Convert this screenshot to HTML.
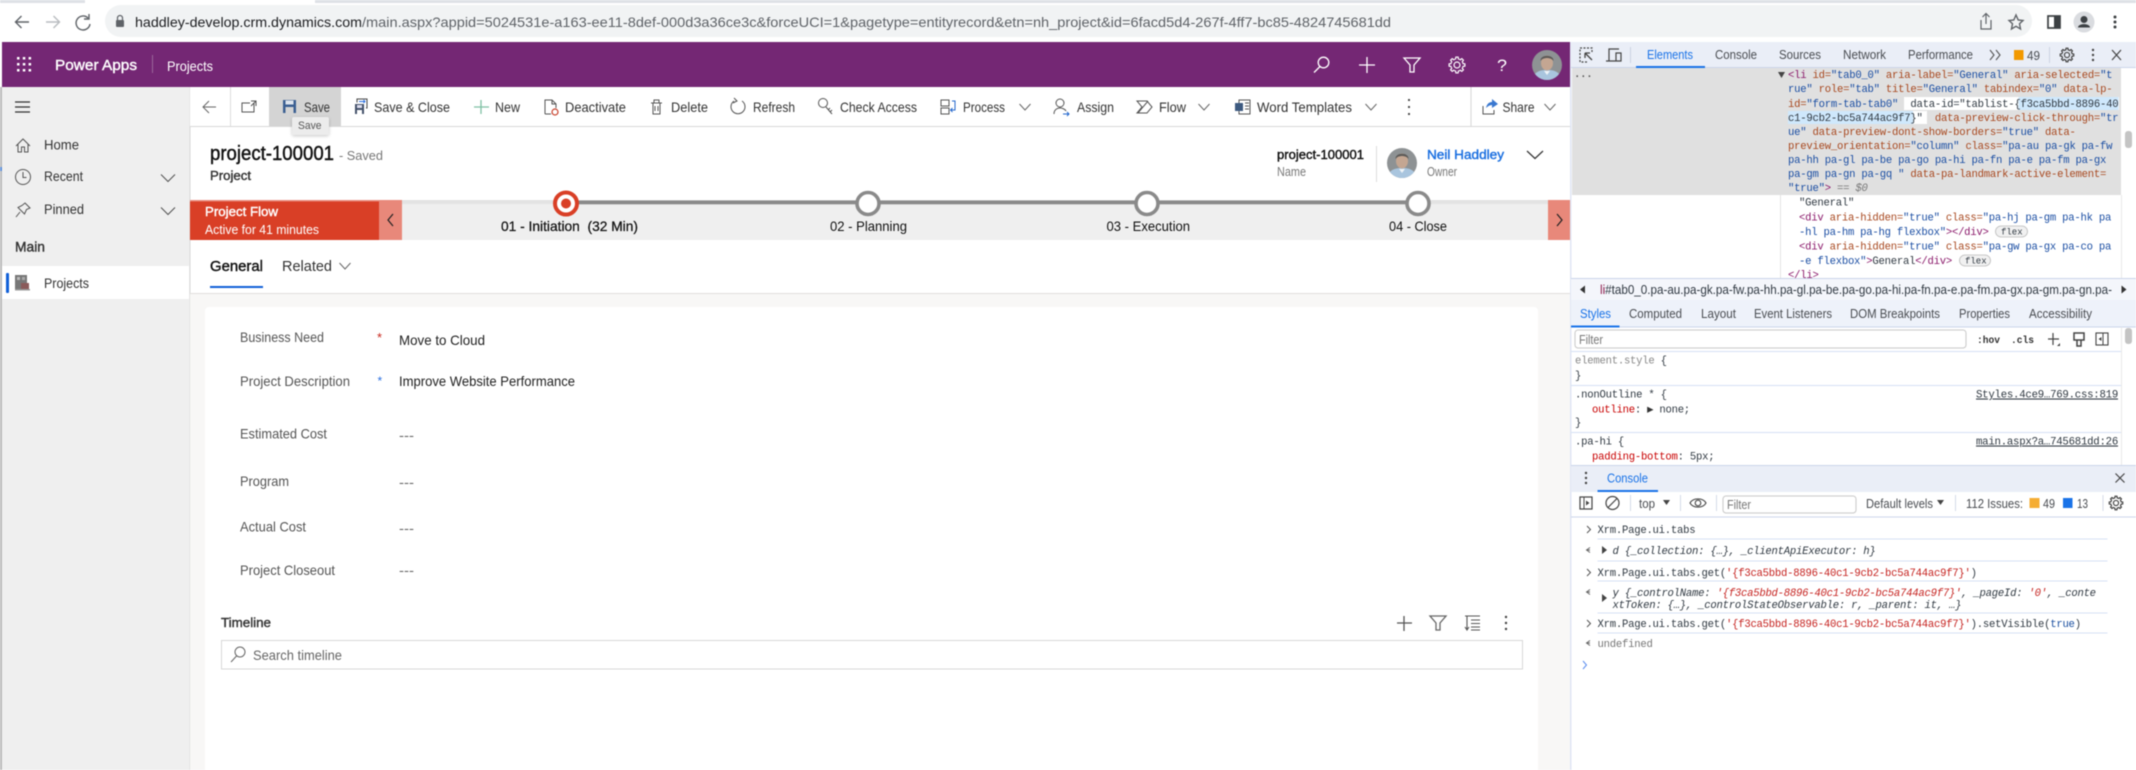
<!DOCTYPE html>
<html lang="en">
<head>
<meta charset="utf-8">
<title>Power Apps - Projects</title>
<style>
html,body{margin:0;padding:0;width:2136px;height:770px;overflow:hidden;background:#fff}
svg{display:block;filter:blur(.5px)}
text{font-family:"Liberation Sans",sans-serif;font-size:14px;fill:#333;white-space:pre}
.w{fill:#fff}
.b{stroke:#333;stroke-width:.4px}
.w.b{stroke:#fff}
.g{fill:#666}
.d{fill:#111}
.u{font-size:14px;fill:#5f6368}
.dt{font-size:13px;fill:#4a4d52}
.m,.m tspan{font-family:"Liberation Mono",monospace;font-size:10.6px;letter-spacing:-.24px;fill:#303942}
.tg{fill:#8b1a6b!important}.an{fill:#a8481f!important}.av{fill:#1b4ea3!important}.tx{fill:#303942!important}
.red{fill:#c5221f!important}.blu{fill:#1a4fa0!important}.gr{fill:#777!important}.i{font-style:italic}
.ic{fill:none;stroke:#555;stroke-width:1}
.iw{fill:none;stroke:#fff;stroke-width:1.3}
.id{fill:none;stroke:#555;stroke-width:1.3}
</style>
</head>
<body>
<svg width="2136" height="770" viewBox="0 0 2136 770" xmlns="http://www.w3.org/2000/svg">
<defs>
<clipPath id="cav"><circle cx="0" cy="0" r="15"/></clipPath>
<g id="avatar">
<g clip-path="url(#cav)">
<rect x="-15" y="-15" width="30" height="30" fill="#8e9294"/>
<path d="M-15 15 C-13 6 -6 5 0 5 C6 5 13 6 15 15Z" fill="#a9c5de"/>
<ellipse cx="0" cy="-2" rx="6" ry="7.500" fill="#c4a692"/>
<path d="M-6.500 -4 C-7 -11 7 -11 6.500 -4 C4 -8 -4 -8 -6.500 -4Z" fill="#5c5a58"/>
<path d="M-3 6 L0 10 L3 6Z" fill="#eef3f7"/>
</g>
</g>
<path id="chev" d="M-7 -3.500 L0 3.500 L7 -3.500" fill="none" stroke="#555" stroke-width="1.100"/>
<path id="chev2" d="M-5.500 -3 L0 3 L5.500 -3" fill="none" stroke="#666" stroke-width="1"/>
<path id="funnel" d="M-8 -7 H8 L2 0 V7 H-2 V0Z" fill="none" stroke-width="1.300"/>
<g id="gear" fill="none">
<circle r="3"/>
<path id="gs" d="M5.730 -2.370 L6.040 -1.390 L7.920 -1.110 V1.110 L6.040 1.390 L5.730 2.370"/>
<use href="#gs" transform="rotate(45)"/><use href="#gs" transform="rotate(90)"/><use href="#gs" transform="rotate(135)"/><use href="#gs" transform="rotate(180)"/><use href="#gs" transform="rotate(225)"/><use href="#gs" transform="rotate(270)"/><use href="#gs" transform="rotate(315)"/>
</g>
<filter id="sh" x="-30%" y="-30%" width="160%" height="170%"><feDropShadow dx="0" dy="1" stdDeviation="1.500" flood-color="#000" flood-opacity=".22"/></filter>
</defs>

<!-- browser chrome -->
<rect width="2136" height="42" fill="#fff"/>
<rect width="85" height="3" fill="#dee1e6"/>
<rect x="315" width="1821" height="3" fill="#dee1e6"/>
<rect x="105" y="5" width="1927" height="32" rx="16" fill="#f1f3f4"/>
<path d="M29 22 H16 M21.500 16 L15.500 22 L21.500 28" fill="none" stroke="#5f6368" stroke-width="1.400"/>
<path d="M46 22 H59 M53.500 16 L59.500 22 L53.500 28" fill="none" stroke="#b9bcc0" stroke-width="1.400"/>
<path d="M88 18 A7 7 0 1 0 90 24 M89 14 V19 H84" fill="none" stroke="#5f6368" stroke-width="1.400"/>
<rect x="116" y="20" width="8" height="7" rx="1" fill="#5f6368"/>
<path d="M117.500 20 V18 A2.500 2.500 0 0 1 122.500 18 V20" fill="none" stroke="#5f6368" stroke-width="1.200"/>
<text x="135" y="27" style="font-size:14px;fill:#202124" textLength="227" lengthAdjust="spacingAndGlyphs">haddley-develop.crm.dynamics.com</text>
<text x="362" y="27" class="u" textLength="1029" lengthAdjust="spacingAndGlyphs">/main.aspx?appid=5024531e-a163-ee11-8def-000d3a36ce3c&amp;forceUCI=1&amp;pagetype=entityrecord&amp;etn=nh_project&amp;id=6facd5d4-267f-4ff7-bc85-4824745681dd</text>
<path d="M1981 20 V29 H1991 V20 M1986 24 V14 M1982.500 17 L1986 13.500 L1989.500 17" fill="none" stroke="#5f6368" stroke-width="1.200"/>
<path d="M2016 15 L2018.200 20 L2023 20.500 L2019.500 23.800 L2020.500 29 L2016 26.300 L2011.500 29 L2012.500 23.800 L2009 20.500 L2013.800 20Z" fill="none" stroke="#5f6368" stroke-width="1.400"/>
<rect x="2048" y="16" width="12" height="12" fill="none" stroke="#3c4043" stroke-width="1.700"/>
<rect x="2054" y="16" width="6" height="12" fill="#3c4043"/>
<circle cx="2084" cy="22" r="10.500" fill="#dadce0"/>
<circle cx="2084" cy="19.500" r="3.500" fill="#3c4043"/>
<path d="M2078 27.500 C2078 23 2090 23 2090 27.500Z" fill="#3c4043"/>
<circle cx="2115" cy="17" r="1.500" fill="#3c4043"/><circle cx="2115" cy="22" r="1.500" fill="#3c4043"/><circle cx="2115" cy="27" r="1.500" fill="#3c4043"/>

<!-- purple header -->
<rect x="2" y="42" width="1568" height="45" fill="#742774"/>
<g fill="#fff">
<rect x="17" y="57" width="2.500" height="2.500"/><rect x="22.800" y="57" width="2.500" height="2.500"/><rect x="28.600" y="57" width="2.500" height="2.500"/>
<rect x="17" y="63" width="2.500" height="2.500"/><rect x="22.800" y="63" width="2.500" height="2.500"/><rect x="28.600" y="63" width="2.500" height="2.500"/>
<rect x="17" y="69" width="2.500" height="2.500"/><rect x="22.800" y="69" width="2.500" height="2.500"/><rect x="28.600" y="69" width="2.500" height="2.500"/>
</g>
<text x="55" y="70" class="w b" style="font-size:15px" textLength="82" lengthAdjust="spacingAndGlyphs">Power Apps</text>
<rect x="152" y="55" width="1" height="18" fill="#9a669a"/>
<text x="167" y="71" class="w" style="font-size:14px" textLength="46" lengthAdjust="spacingAndGlyphs">Projects</text>
<circle cx="1323.500" cy="62.500" r="5.300" class="iw"/><path d="M1320 66.500 L1314 72.500" class="iw"/>
<path d="M1367 57 V73 M1359 65 H1375" class="iw"/>
<use href="#funnel" x="1412" y="65" stroke="#fff"/>
<use href="#gear" transform="translate(1457 65)" stroke="#fff" stroke-width="1.200"/>
<text x="1497" y="71" class="w" style="font-size:17px" textLength="10" lengthAdjust="spacingAndGlyphs">?</text>
<use href="#avatar" x="1547" y="65"/>

<!-- left nav -->
<rect x="0" y="42" width="2" height="45" fill="#fff"/>
<rect x="0" y="87" width="2" height="683" fill="#bababa"/>
<rect x="0" y="167" width="2" height="4" fill="#5b8ed8"/>
<rect x="2" y="87" width="188" height="683" fill="#efefef"/>
<rect x="189.500" y="87" width="1" height="683" fill="#d8d8d8"/>
<path d="M15 102 H30 M15 107 H30 M15 112 H30" fill="none" stroke="#333" stroke-width="1.200"/>
<path d="M16 146 L23 139 L30 146 M18 144.500 V152 H21.500 V147 H24.500 V152 H28 V144.500" class="ic"/>
<text x="44" y="149.500" textLength="35" lengthAdjust="spacingAndGlyphs">Home</text>
<circle cx="23" cy="177" r="7.500" class="ic"/><path d="M23 172 V177.500 H26.500" class="ic"/>
<text x="44" y="181" textLength="39" lengthAdjust="spacingAndGlyphs">Recent</text>
<use href="#chev" x="168" y="178"/>
<path d="M25 203 L30 208 L26.500 209.500 L24.500 214 L18 207.500 L22 205.500Z M20 212 L16 217" class="ic"/>
<text x="44" y="214" textLength="40" lengthAdjust="spacingAndGlyphs">Pinned</text>
<use href="#chev" x="168" y="211"/>
<text x="15" y="251.500" class="b" style="fill:#333" textLength="30" lengthAdjust="spacingAndGlyphs">Main</text>
<rect x="2" y="266" width="187" height="33" fill="#fff"/>
<rect x="6" y="273" width="3" height="20" rx="1" fill="#1160d8"/>
<rect x="15" y="275" width="12" height="15" fill="#777"/>
<rect x="17" y="277" width="3" height="3" fill="#bbb"/><rect x="22" y="277" width="3" height="3" fill="#aaa"/>
<rect x="21" y="283" width="8" height="7" fill="#8a5a5a"/><rect x="15" y="289" width="15" height="1.500" fill="#999"/>
<text x="44" y="288" textLength="45" lengthAdjust="spacingAndGlyphs">Projects</text>

<!-- command bar -->
<rect x="190" y="87" width="1380" height="39" fill="#fff"/>
<rect x="190" y="126" width="1380" height="1" fill="#d8d8d8"/>
<path d="M216 107 H203 M209 101 L203 107 L209 113" class="ic" style="stroke:#666"/>
<rect x="230" y="87" width="1" height="39" fill="#ddd"/>
<path d="M254 103 V112 H242 V103 H250 M251 101 H256 V106 M251 106 L256 101" class="ic"/>
<rect x="269" y="87" width="72" height="39" fill="#d4d4d4"/>
<rect x="283" y="100" width="13" height="13" fill="#3b5f92"/>
<rect x="285.500" y="100.500" width="8" height="4" fill="#dfe6ef"/>
<rect x="285.500" y="107" width="8" height="6" fill="#d4d4d4"/>
<text x="304" y="112" textLength="26" lengthAdjust="spacingAndGlyphs">Save</text>
<rect x="355" y="104" width="9" height="10" fill="#44526a"/>
<rect x="357" y="105" width="5" height="3" fill="#dde"/><rect x="357" y="110" width="5" height="4" fill="#fff"/>
<path d="M357 102.500 V99 H367 V108 H366" fill="none" stroke="#444" stroke-width="1"/>
<path d="M359 101.500 H365 M363.500 100 L365 101.500 L363.500 103" stroke="#2a6fe0" fill="none" stroke-width="1"/>
<text x="374" y="112" textLength="76" lengthAdjust="spacingAndGlyphs">Save &amp; Close</text>
<path d="M481 100 V114 M474 107 H489" fill="none" stroke="#7fc0a4" stroke-width="1.300"/>
<text x="495" y="112" textLength="25" lengthAdjust="spacingAndGlyphs">New</text>
<path d="M545 114 V100 H552 L556 104 V108 M552 100 V104 H556 M545 114 H551" class="ic"/>
<circle cx="555" cy="112" r="3" fill="none" stroke="#c8402a" stroke-width="1.200"/>
<text x="565" y="112" textLength="61" lengthAdjust="spacingAndGlyphs">Deactivate</text>
<path d="M651 103 H662 M653 103 V114 H660 V103 M654 103 V100 H659 V103 M655 106 V111 M658 106 V111" class="ic"/>
<text x="671" y="112" textLength="37" lengthAdjust="spacingAndGlyphs">Delete</text>
<path d="M742 101 A7 7 0 1 1 734 101" class="ic"/><path d="M734 98 L737 101 L733 103" class="ic"/>
<text x="753" y="112" textLength="42" lengthAdjust="spacingAndGlyphs">Refresh</text>
<circle cx="823" cy="103" r="4.500" class="ic"/><path d="M826 107 L832 114 M828 110 L830 108 M830 112 L832 110" class="ic"/>
<text x="840" y="112" textLength="77" lengthAdjust="spacingAndGlyphs">Check Access</text>
<path d="M941 100 H949 V106 H941Z M941 108 H949 V114 H941Z" class="ic"/><path d="M952 101 H955 V110 H951 M952.500 108 L950.500 110 L952.500 112" fill="none" stroke="#2266cc" stroke-width="1"/>
<text x="963" y="112" textLength="42" lengthAdjust="spacingAndGlyphs">Process</text>
<use href="#chev2" x="1025" y="107"/>
<circle cx="1060" cy="103" r="4" class="ic"/><path d="M1054 114 C1054 109 1058 108 1060 108 C1062 108 1065 109 1066 111" class="ic"/>
<path d="M1063 114 H1069 M1067 112 L1069 114 L1067 116" fill="none" stroke="#2266cc" stroke-width="1"/>
<text x="1077" y="112" textLength="37" lengthAdjust="spacingAndGlyphs">Assign</text>
<path d="M1137 101 H1147 L1152 107 L1147 113 H1137 L1142 107Z M1138 113 L1148 101" class="ic"/>
<text x="1159" y="112" textLength="27" lengthAdjust="spacingAndGlyphs">Flow</text>
<use href="#chev2" x="1204" y="107"/>
<rect x="1239" y="100" width="11" height="14" fill="none" stroke="#555" stroke-width="1"/>
<rect x="1235" y="103" width="8" height="8" fill="#3d5a80"/>
<path d="M1245 103 H1249 M1245 106 H1249 M1245 109 H1249" class="ic" style="stroke-width:.9"/>
<text x="1257" y="112" textLength="95" lengthAdjust="spacingAndGlyphs">Word Templates</text>
<use href="#chev2" x="1371" y="107"/>
<circle cx="1409" cy="100" r="1.100" fill="#444"/><circle cx="1409" cy="107" r="1.100" fill="#444"/><circle cx="1409" cy="114" r="1.100" fill="#444"/>
<rect x="1470.500" y="87" width="1" height="39" fill="#d4d4d4"/>
<path d="M1483 106 V114 H1494 V110" class="ic"/>
<path d="M1486 108 C1487 103 1490 102 1492 102 V99 L1498 104 L1492 108 V105 C1490 105 1488 106 1486 108Z" fill="#3a78d0"/>
<text x="1502.500" y="112" textLength="32" lengthAdjust="spacingAndGlyphs">Share</text>
<use href="#chev2" x="1550" y="107"/>

<!-- record header -->
<text x="210" y="160" class="d" style="font-size:20px;stroke:#111;stroke-width:.45px" textLength="124" lengthAdjust="spacingAndGlyphs">project-100001</text>
<text x="339" y="160" style="font-size:13px;fill:#777" textLength="44" lengthAdjust="spacingAndGlyphs">- Saved</text>
<text x="210" y="180" class="b" style="font-size:13px" textLength="41" lengthAdjust="spacingAndGlyphs">Project</text>
<text x="1277" y="159" class="b d" style="font-size:13px;stroke:#111" textLength="87" lengthAdjust="spacingAndGlyphs">project-100001</text>
<text x="1277" y="176" style="font-size:13px;fill:#777" textLength="29" lengthAdjust="spacingAndGlyphs">Name</text>
<rect x="1376" y="146" width="1" height="36" fill="#ddd"/>
<use href="#avatar" x="1402" y="163"/>
<text x="1427" y="159" style="font-size:13px;fill:#1a6fe0;stroke:#1a6fe0;stroke-width:.4px" textLength="77" lengthAdjust="spacingAndGlyphs">Neil Haddley</text>
<text x="1427" y="176" style="font-size:13px;fill:#777" textLength="30" lengthAdjust="spacingAndGlyphs">Owner</text>
<path d="M1527 151 L1535 158.500 L1543 151" fill="none" stroke="#333" stroke-width="1.200"/>

<!-- BPF -->
<rect x="190" y="200" width="1380" height="40" fill="#efefef"/>
<rect x="402" y="200" width="1146" height="4" fill="#e3e3e3"/>
<rect x="190" y="200" width="189" height="40" fill="#d93f26"/>
<rect x="190" y="200" width="189" height="1.500" fill="#e8887a"/>
<rect x="379" y="200" width="23" height="40" fill="#e8887a"/>
<rect x="1548" y="200" width="22" height="40" fill="#e8887a"/>
<text x="205" y="216" class="w b" style="font-size:13px" textLength="73" lengthAdjust="spacingAndGlyphs">Project Flow</text>
<text x="205" y="234" class="w" style="font-size:13px" textLength="114" lengthAdjust="spacingAndGlyphs">Active for 41 minutes</text>
<path d="M393 214 L388 220 L393 226" fill="none" stroke="#222" stroke-width="1.200"/>
<path d="M1557 214 L1562 220 L1557 226" fill="none" stroke="#222" stroke-width="1.200"/>
<rect x="566" y="200.500" width="852" height="3.800" fill="#8a8a8a"/>
<circle cx="566" cy="203.500" r="11" fill="#fff" stroke="#d93f26" stroke-width="4"/>
<circle cx="566" cy="203.500" r="5" fill="#d93f26"/>
<circle cx="868" cy="203.500" r="11" fill="#fff" stroke="#8a8a8a" stroke-width="3.600"/>
<circle cx="1147" cy="203.500" r="11" fill="#fff" stroke="#8a8a8a" stroke-width="3.600"/>
<circle cx="1418" cy="203.500" r="11" fill="#fff" stroke="#8a8a8a" stroke-width="3.600"/>
<text x="501" y="231" class="d" style="font-size:14px;stroke:#111;stroke-width:.25px" textLength="137" lengthAdjust="spacingAndGlyphs">01 - Initiation  (32 Min)</text>
<text x="830" y="231" class="d" style="font-size:14px" textLength="77" lengthAdjust="spacingAndGlyphs">02 - Planning</text>
<text x="1106.500" y="231" class="d" style="font-size:14px" textLength="83.500" lengthAdjust="spacingAndGlyphs">03 - Execution</text>
<text x="1389" y="231" class="d" style="font-size:14px" textLength="58" lengthAdjust="spacingAndGlyphs">04 - Close</text>

<!-- tabs -->
<text x="210" y="271" class="b d" style="font-size:15px;stroke:#111" textLength="53" lengthAdjust="spacingAndGlyphs">General</text>
<text x="282" y="271" style="font-size:15px" textLength="50" lengthAdjust="spacingAndGlyphs">Related</text>
<use href="#chev2" x="345" y="266"/>
<rect x="210" y="286" width="53" height="2" fill="#1160d8"/>
<rect x="190" y="293" width="1380" height="477" fill="#f8f7f6"/>
<rect x="190" y="293" width="1380" height="1" fill="#e1dfdd"/>
<rect x="205" y="307" width="1333" height="470" rx="4" fill="#fff"/>

<!-- fields -->
<text x="240" y="342" style="fill:#555" textLength="84" lengthAdjust="spacingAndGlyphs">Business Need</text>
<text x="377" y="342" style="font-size:13px;fill:#c8281e">*</text>
<text x="399" y="345" style="fill:#222" textLength="86" lengthAdjust="spacingAndGlyphs">Move to Cloud</text>
<text x="240" y="386" style="fill:#555" textLength="110" lengthAdjust="spacingAndGlyphs">Project Description</text>
<text x="377.500" y="385" style="font-size:12px;fill:#2a6fe0">*</text>
<text x="399" y="386" style="fill:#222" textLength="176" lengthAdjust="spacingAndGlyphs">Improve Website Performance</text>
<text x="240" y="438.500" style="fill:#555" textLength="87" lengthAdjust="spacingAndGlyphs">Estimated Cost</text>
<text x="399" y="440" class="g" textLength="15" lengthAdjust="spacingAndGlyphs">---</text>
<text x="240" y="486" style="fill:#555" textLength="49" lengthAdjust="spacingAndGlyphs">Program</text>
<text x="399" y="487" class="g" textLength="15" lengthAdjust="spacingAndGlyphs">---</text>
<text x="240" y="531.500" style="fill:#555" textLength="66" lengthAdjust="spacingAndGlyphs">Actual Cost</text>
<text x="399" y="533" class="g" textLength="15" lengthAdjust="spacingAndGlyphs">---</text>
<text x="240" y="575" style="fill:#555" textLength="95" lengthAdjust="spacingAndGlyphs">Project Closeout</text>
<text x="399" y="575" class="g" textLength="15" lengthAdjust="spacingAndGlyphs">---</text>

<!-- timeline -->
<text x="221" y="627" class="b" style="font-size:13px" textLength="50" lengthAdjust="spacingAndGlyphs">Timeline</text>
<path d="M1404 616 V631 M1397 623 H1412" class="id"/>
<use href="#funnel" x="1438" y="623" stroke="#666"/>
<path d="M1465 616 H1480 M1471 620 H1480 M1471 623.500 H1480 M1471 627 H1480 M1471 630 H1480 M1467 616 V629 M1465 627 L1467 630 L1469 627" fill="none" stroke="#555" stroke-width="1.100"/>
<circle cx="1506" cy="617" r="1.200" fill="#444"/><circle cx="1506" cy="623" r="1.200" fill="#444"/><circle cx="1506" cy="629" r="1.200" fill="#444"/>
<rect x="221.500" y="640.500" width="1301" height="28.500" fill="#fff" stroke="#d8d8d8"/>
<circle cx="240" cy="652" r="5" class="ic" style="stroke:#666"/><path d="M236.500 656 L231 662" class="ic" style="stroke:#666"/>
<text x="253" y="660" style="fill:#666" textLength="89" lengthAdjust="spacingAndGlyphs">Search timeline</text>

<!-- tooltip -->
<rect x="292" y="117" width="37" height="18" rx="2" fill="#ececec" filter="url(#sh)"/>
<text x="298" y="129" style="font-size:11px;fill:#555" textLength="23.500" lengthAdjust="spacingAndGlyphs">Save</text>

<!-- devtools base -->
<rect x="1570" y="42" width="566" height="728" fill="#fff"/>
<rect x="1570" y="42" width="1.500" height="728" fill="#e0e6f4"/>
<rect x="1571" y="42" width="565" height="25" fill="#eaeef7"/>
<rect x="1571" y="67" width="565" height="1" fill="#cbd5ea"/>
<path d="M1587 62 H1580 V48 H1592 V53" fill="none" stroke="#444" stroke-width="1.200" stroke-dasharray="2 1.500"/>
<path d="M1585 53 L1592 60 M1585 53 H1590 M1585 53 V58" fill="none" stroke="#444" stroke-width="1.300"/>
<path d="M1606 61 H1620 M1609 61 V49 H1619 M1616 53 H1621 V61 H1616Z" fill="none" stroke="#444" stroke-width="1.200"/>
<rect x="1630" y="47" width="1" height="16" fill="#ccd3e2"/>
<text x="1647" y="59" class="dt" style="fill:#1a73e8" textLength="46" lengthAdjust="spacingAndGlyphs">Elements</text>
<rect x="1636" y="66" width="69" height="2" fill="#1a73e8"/>
<text x="1715" y="59" class="dt" textLength="42" lengthAdjust="spacingAndGlyphs">Console</text>
<text x="1779" y="59" class="dt" textLength="42" lengthAdjust="spacingAndGlyphs">Sources</text>
<text x="1843" y="59" class="dt" textLength="43" lengthAdjust="spacingAndGlyphs">Network</text>
<text x="1908" y="59" class="dt" textLength="65" lengthAdjust="spacingAndGlyphs">Performance</text>
<path d="M1990 50 L1994 55 L1990 60 M1996 50 L2000 55 L1996 60" fill="none" stroke="#555" stroke-width="1.100"/>
<rect x="2014" y="50" width="9.500" height="10" fill="#f29900"/>
<text x="2027" y="60" class="dt" textLength="13" lengthAdjust="spacingAndGlyphs">49</text>
<rect x="2049" y="47" width="1" height="16" fill="#ccd3e2"/>
<use href="#gear" transform="translate(2067 55) scale(.85)" stroke="#444" stroke-width="1.400"/>
<circle cx="2093" cy="50" r="1.200" fill="#444"/><circle cx="2093" cy="55" r="1.200" fill="#444"/><circle cx="2093" cy="60" r="1.200" fill="#444"/>
<path d="M2112 50 L2121 60 M2121 50 L2112 60" fill="none" stroke="#444" stroke-width="1.200"/>

<!-- elements panel -->
<rect x="1572" y="68" width="549" height="127" fill="#e0e0e0"/>
<rect x="2121" y="68" width="15" height="210" fill="#fff"/>
<rect x="2125" y="131" width="7" height="17" rx="3" fill="#c4c4c4"/>
<rect x="1780" y="195" width="1" height="83" fill="#e4e4e4"/>
<rect x="2121" y="195" width="1" height="83" fill="#e8e8e8"/>
<text x="1574" y="77" class="m" style="font-weight:700;fill:#555">...</text>
<path d="M1778 72 H1785 L1781.500 78Z" fill="#444"/>
<rect x="1904" y="97" width="215" height="13" fill="#fff"/>
<rect x="1788" y="111" width="139" height="13" fill="#fff"/>
<rect x="2018.500" y="97" width="100" height="13" fill="#cfe8fc"/>
<rect x="1788" y="111" width="125" height="13" fill="#cfe8fc"/>
<text x="1788" y="78" class="m"><tspan class="tg">&lt;li</tspan> <tspan class="an">id=</tspan><tspan class="av">"tab0_0"</tspan> <tspan class="an">aria-label=</tspan><tspan class="av">"General"</tspan> <tspan class="an">aria-selected=</tspan><tspan class="av">"t</tspan></text>
<text x="1788" y="92" class="m"><tspan class="av">rue"</tspan> <tspan class="an">role=</tspan><tspan class="av">"tab"</tspan> <tspan class="an">title=</tspan><tspan class="av">"General"</tspan> <tspan class="an">tabindex=</tspan><tspan class="av">"0"</tspan> <tspan class="an">data-lp-</tspan></text>
<text x="1788" y="107" class="m"><tspan class="an">id=</tspan><tspan class="av">"form-tab-tab0"</tspan> <tspan class="tx"> data-id="tablist-{f3ca5bbd-8896-40</tspan></text>
<text x="1788" y="121" class="m"><tspan class="tx">c1-9cb2-bc5a744ac9f7}"</tspan>  <tspan class="an">data-preview-click-through=</tspan><tspan class="av">"tr</tspan></text>
<text x="1788" y="135" class="m"><tspan class="av">ue"</tspan> <tspan class="an">data-preview-dont-show-borders=</tspan><tspan class="av">"true"</tspan> <tspan class="an">data-</tspan></text>
<text x="1788" y="149" class="m"><tspan class="an">preview_orientation=</tspan><tspan class="av">"column"</tspan> <tspan class="an">class=</tspan><tspan class="av">"pa-au pa-gk pa-fw</tspan></text>
<text x="1788" y="163" class="m"><tspan class="av">pa-hh pa-gl pa-be pa-go pa-hi pa-fn pa-e pa-fm pa-gx</tspan></text>
<text x="1788" y="177" class="m"><tspan class="av">pa-gm pa-gn pa-gq "</tspan> <tspan class="an">data-pa-landmark-active-element=</tspan></text>
<text x="1788" y="191" class="m"><tspan class="av">"true"</tspan><tspan class="tg">&gt;</tspan> <tspan class="gr">== </tspan><tspan class="gr i">$0</tspan></text>
<text x="1799" y="205.500" class="m">"General"</text>
<text x="1799" y="220.500" class="m"><tspan class="tg">&lt;div</tspan> <tspan class="an">aria-hidden=</tspan><tspan class="av">"true"</tspan> <tspan class="an">class=</tspan><tspan class="av">"pa-hj pa-gm pa-hk pa</tspan></text>
<text x="1799" y="235" class="m"><tspan class="av">-hl pa-hm pa-hg flexbox"</tspan><tspan class="tg">&gt;&lt;/div&gt;</tspan></text>
<rect x="1995.500" y="226" width="32" height="11" rx="5.500" fill="#f1f1f1" stroke="#bbb" stroke-width=".8"/>
<text x="2001" y="234.500" class="m" style="font-size:9px;letter-spacing:0">flex</text>
<text x="1799" y="249.500" class="m"><tspan class="tg">&lt;div</tspan> <tspan class="an">aria-hidden=</tspan><tspan class="av">"true"</tspan> <tspan class="an">class=</tspan><tspan class="av">"pa-gw pa-gx pa-co pa</tspan></text>
<text x="1799" y="264" class="m"><tspan class="av">-e flexbox"</tspan><tspan class="tg">&gt;</tspan>General<tspan class="tg">&lt;/div&gt;</tspan></text>
<rect x="1959.500" y="255" width="31" height="11" rx="5.500" fill="#f1f1f1" stroke="#bbb" stroke-width=".8"/>
<text x="1965" y="263.500" class="m" style="font-size:9px;letter-spacing:0">flex</text>
<text x="1788" y="278" class="m"><tspan class="tg">&lt;/li&gt;</tspan></text>

<!-- breadcrumb -->
<rect x="1571" y="278" width="565" height="24" fill="#f4f6fb"/>
<rect x="1571" y="278" width="565" height="1" fill="#cbd5ea"/>
<path d="M1585 285.500 L1580 289.500 L1585 293.500Z M2121.500 285.500 L2126.500 289.500 L2121.500 293.500Z" fill="#333"/>
<text x="1600" y="294" style="font-size:13px;fill:#303942" textLength="512" lengthAdjust="spacingAndGlyphs"><tspan style="fill:#8b1a4a">li</tspan>#tab0_0.pa-au.pa-gk.pa-fw.pa-hh.pa-gl.pa-be.pa-go.pa-hi.pa-fn.pa-e.pa-fm.pa-gx.pa-gm.pa-gn.pa-</text>

<!-- styles tabs -->
<rect x="1571" y="300" width="565" height="27" fill="#eef2fa"/>
<rect x="1571" y="326.500" width="565" height="1" fill="#cbd5ea"/>
<text x="1580" y="318" class="dt" style="fill:#1a73e8" textLength="31" lengthAdjust="spacingAndGlyphs">Styles</text>
<rect x="1571" y="325.500" width="48.500" height="2" fill="#1a73e8"/>
<text x="1629" y="318" class="dt" textLength="53" lengthAdjust="spacingAndGlyphs">Computed</text>
<text x="1701" y="318" class="dt" textLength="35" lengthAdjust="spacingAndGlyphs">Layout</text>
<text x="1754" y="318" class="dt" textLength="78" lengthAdjust="spacingAndGlyphs">Event Listeners</text>
<text x="1850" y="318" class="dt" textLength="90" lengthAdjust="spacingAndGlyphs">DOM Breakpoints</text>
<text x="1959" y="318" class="dt" textLength="51" lengthAdjust="spacingAndGlyphs">Properties</text>
<text x="2029" y="318" class="dt" textLength="63" lengthAdjust="spacingAndGlyphs">Accessibility</text>

<!-- filter row -->
<rect x="1575" y="330" width="391" height="18" rx="3" fill="#fff" stroke="#c8c8c8"/>
<text x="1579" y="344" class="dt" style="fill:#777" textLength="24" lengthAdjust="spacingAndGlyphs">Filter</text>
<text x="1977" y="343" class="m" style="font-weight:700;fill:#333;font-size:10.200px;letter-spacing:0" textLength="23" lengthAdjust="spacingAndGlyphs">:hov</text>
<text x="2011" y="343" class="m" style="font-weight:700;fill:#333;font-size:10.200px;letter-spacing:0" textLength="23" lengthAdjust="spacingAndGlyphs">.cls</text>
<path d="M2053 333 V345 M2048 339 H2059" fill="none" stroke="#444" stroke-width="1.200"/>
<path d="M2060 343 V346 H2057Z" fill="#444"/>
<path d="M2074 333 H2084 V340 H2074Z M2077 340 H2081 V346 H2077Z" fill="none" stroke="#444" stroke-width="1.500"/>
<rect x="2096" y="333" width="12" height="12" fill="none" stroke="#444" stroke-width="1.100"/>
<path d="M2103 333 V345" stroke="#444"/><path d="M2101.500 337 L2098.500 339 L2101.500 341Z" fill="#444"/>
<rect x="1571" y="351" width="550" height="1" fill="#d6e1f5"/>
<rect x="2125" y="328" width="7" height="16" rx="3" fill="#c4c4c4"/>
<rect x="2121" y="327" width="1" height="138" fill="#e8e8e8"/>

<!-- styles rules -->
<text x="1575" y="363.500" class="m" style="fill:#888">element.style <tspan style="fill:#303942">{</tspan></text>
<text x="1575" y="378.500" class="m">}</text>
<rect x="1571" y="385" width="550" height="1" fill="#d6e1f5"/>
<text x="1575" y="397.500" class="m">.nonOutline * {</text>
<text x="1976" y="397.500" class="m" style="text-decoration:underline" textLength="142" lengthAdjust="spacingAndGlyphs">Styles.4ce9…769.css:819</text>
<text x="1592" y="412.500" class="m"><tspan style="fill:#c80000">outline</tspan>: <tspan style="fill:#333">▶</tspan> none;</text>
<text x="1575" y="425.500" class="m">}</text>
<rect x="1571" y="432" width="550" height="1" fill="#d6e1f5"/>
<text x="1575" y="444.500" class="m">.pa-hi {</text>
<text x="1976" y="444.500" class="m" style="text-decoration:underline" textLength="142" lengthAdjust="spacingAndGlyphs">main.aspx?a…745681dd:26</text>
<text x="1592" y="459.500" class="m"><tspan style="fill:#c80000">padding-bottom</tspan>: 5px;</text>

<!-- console drawer -->
<rect x="1571" y="465" width="565" height="27" fill="#eaeef7"/>
<rect x="1571" y="465" width="565" height="1" fill="#cbd5ea"/>
<circle cx="1586" cy="473" r="1.200" fill="#444"/><circle cx="1586" cy="478" r="1.200" fill="#444"/><circle cx="1586" cy="483" r="1.200" fill="#444"/>
<text x="1607" y="482.500" class="dt" style="fill:#1a73e8" textLength="41" lengthAdjust="spacingAndGlyphs">Console</text>
<rect x="1597.500" y="490" width="60.500" height="2" fill="#1a73e8"/>
<path d="M2115.500 473.500 L2124.500 482.500 M2124.500 473.500 L2115.500 482.500" fill="none" stroke="#444" stroke-width="1.200"/>
<rect x="1571" y="516.500" width="565" height="1" fill="#cbd5ea"/>
<rect x="1580" y="497" width="12" height="12" fill="none" stroke="#444" stroke-width="1.200"/>
<path d="M1584 497 V509" stroke="#444"/><path d="M1586 500.500 L1589.500 503 L1586 505.500Z" fill="#444"/>
<circle cx="1612.500" cy="503" r="6.500" fill="none" stroke="#444" stroke-width="1.200"/><path d="M1608 507.500 L1617 498.500" stroke="#444" stroke-width="1.200"/>
<rect x="1630" y="495" width="1" height="16" fill="#d4dbe8"/>
<text x="1639" y="508" class="dt" textLength="16" lengthAdjust="spacingAndGlyphs">top</text>
<path d="M1663 500 H1670 L1666.500 505Z" fill="#444"/>
<rect x="1680" y="495" width="1" height="16" fill="#d4dbe8"/>
<path d="M1690 503 C1693 497.500 1703 497.500 1706 503 C1703 508.500 1693 508.500 1690 503Z" fill="none" stroke="#444" stroke-width="1.100"/>
<circle cx="1698" cy="503" r="2.800" fill="none" stroke="#444" stroke-width="1.100"/>
<rect x="1716" y="495" width="1" height="16" fill="#d4dbe8"/>
<rect x="1723" y="496" width="133" height="17" rx="3" fill="#fff" stroke="#c8c8c8"/>
<text x="1727" y="509" class="dt" style="fill:#777" textLength="24" lengthAdjust="spacingAndGlyphs">Filter</text>
<text x="1866" y="508" class="dt" textLength="67" lengthAdjust="spacingAndGlyphs">Default levels</text>
<path d="M1937 500 H1944 L1940.500 505Z" fill="#444"/>
<rect x="1955" y="495" width="1" height="16" fill="#d4dbe8"/>
<text x="1966" y="508" class="dt" textLength="57" lengthAdjust="spacingAndGlyphs">112 Issues:</text>
<rect x="2029.500" y="498" width="10" height="10" fill="#f29900" opacity=".8"/>
<text x="2043" y="508" class="dt" textLength="12" lengthAdjust="spacingAndGlyphs">49</text>
<rect x="2063" y="498" width="9.500" height="10" fill="#1a73e8"/>
<text x="2077" y="508" class="dt" textLength="11" lengthAdjust="spacingAndGlyphs">13</text>
<rect x="2102.500" y="495" width="1" height="16" fill="#d4dbe8"/>
<use href="#gear" transform="translate(2116 503) scale(.85)" stroke="#444" stroke-width="1.400"/>

<!-- console lines -->
<g fill="none" stroke="#555" stroke-width="1">
<path d="M1587 526 L1590.500 529.500 L1587 533"/>
<path d="M1587 569 L1590.500 572.500 L1587 576"/>
<path d="M1587 620 L1590.500 623.500 L1587 627"/>
<path d="M1590 547.500 L1586.500 550 L1590 552.500 M1587 550 H1590" stroke="#666"/>
<path d="M1590 589.500 L1586.500 592 L1590 594.500 M1587 592 H1590" stroke="#666"/>
<path d="M1590 640.500 L1586.500 643 L1590 645.500 M1587 643 H1590" stroke="#666"/>
<path d="M1583 661 L1586.500 665 L1583 669" stroke="#5b8def"/>
</g>
<text x="1597.500" y="533" class="m">Xrm.Page.ui.tabs</text>
<rect x="1597.500" y="538.500" width="510" height="1" fill="#d6e1f5"/>
<path d="M1602 546 L1607 550 L1602 554Z" fill="#444"/>
<text x="1612.500" y="554" class="m i">d {_collection: {…}, _clientApiExecutor: h}</text>
<rect x="1597.500" y="560.500" width="510" height="1" fill="#d6e1f5"/>
<text x="1597.500" y="576" class="m">Xrm.Page.ui.tabs.get(<tspan class="red">'{f3ca5bbd-8896-40c1-9cb2-bc5a744ac9f7}'</tspan>)</text>
<rect x="1597.500" y="580.500" width="510" height="1" fill="#d6e1f5"/>
<path d="M1602 594 L1607 598 L1602 602Z" fill="#444"/>
<text x="1612.500" y="596" class="m i">y {_controlName: <tspan class="red">'{f3ca5bbd-8896-40c1-9cb2-bc5a744ac9f7}'</tspan>, _pageId: <tspan class="red">'0'</tspan>, _conte</text>
<text x="1612.500" y="608" class="m i">xtToken: {…}, _controlStateObservable: r, _parent: it, …}</text>
<rect x="1597.500" y="612.500" width="510" height="1" fill="#d6e1f5"/>
<text x="1597.500" y="627" class="m">Xrm.Page.ui.tabs.get(<tspan class="red">'{f3ca5bbd-8896-40c1-9cb2-bc5a744ac9f7}'</tspan>).setVisible(<tspan class="blu">true</tspan>)</text>
<rect x="1597.500" y="632.500" width="510" height="1" fill="#d6e1f5"/>
<text x="1597.500" y="647" class="m" style="fill:#777">undefined</text>
</svg>
</body>
</html>
